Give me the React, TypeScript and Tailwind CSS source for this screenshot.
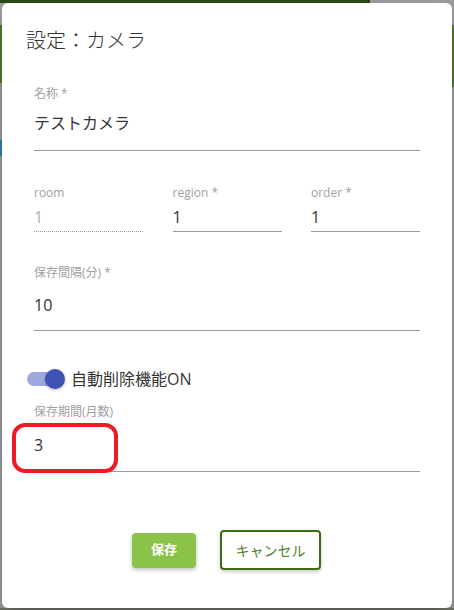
import React from "react"

const jp = { fontFamily: '"Open Sans", "Noto Sans CJK JP", sans-serif' }

function Label({ children }: { children: React.ReactNode }) {
  return <div className="text-[12px] leading-[16px] text-[#a0a0a0]">{children}</div>
}

export default function App() {
  return (
    <div className="relative w-[454px] h-[610px] overflow-hidden bg-[#9b9b9b]" style={jp}>
      {/* dimmed page behind the dialog */}
      <div className="absolute left-0 top-0 w-[370px] h-[3px] bg-[#2b4a17]" />
      <div className="absolute left-0 top-[25px] w-[3px] h-[58px] bg-[#4f7a2c]" />
      <div className="absolute left-0 top-[140px] w-[3px] h-[16px] bg-[#2b86ad]" />
      <div className="absolute right-0 top-[25px] w-[3px] h-[62px] bg-[#4f7a2c]" />
      <div className="absolute left-0 bottom-0 w-full h-[2px] bg-[#76766e]" />

      {/* dialog */}
      <div className="relative ml-[2px] mt-[3px] w-[450px] h-[605px] bg-white rounded-[6px] shadow-[0_11px_15px_-7px_rgba(0,0,0,0.2),0_24px_38px_3px_rgba(0,0,0,0.14)] flex flex-col">
        <div className="pl-[24px] mt-[24px] text-[20px] leading-[28px] font-light text-[#333]">設定：カメラ</div>

        <div className="flex flex-col pl-[32px] pr-[32px]">
          {/* 名称 */}
          <div className="mt-[31px] border-b border-[#9a9a9a] pb-[15px]">
            <Label>名称 *</Label>
            <div className="mt-[9px] text-[16px] leading-[24px] text-[#333]">テストカメラ</div>
          </div>

          {/* room / region / order */}
          <div className="mt-[34px] flex justify-between">
            <div className="w-[109px] pb-[2px] border-b border-dotted border-[#9a9a9a]">
              <Label>room</Label>
              <div className="mt-[4px] text-[16px] leading-[24px] text-[#b0b0b0]">1</div>
            </div>
            <div className="w-[109px] pb-[2px] border-b border-[#9a9a9a]">
              <Label>region *</Label>
              <div className="mt-[4px] text-[16px] leading-[24px] text-[#333]">1</div>
            </div>
            <div className="w-[109px] pb-[2px] border-b border-[#9a9a9a]">
              <Label>order *</Label>
              <div className="mt-[4px] text-[16px] leading-[24px] text-[#333]">1</div>
            </div>
          </div>

          {/* 保存間隔 */}
          <div className="mt-[33px] border-b border-[#9a9a9a] pb-[13px]">
            <Label>保存間隔(分) *</Label>
            <div className="mt-[12px] text-[16px] leading-[24px] text-[#333]">10</div>
          </div>
        </div>

        {/* switch */}
        <div className="mt-[36px] pl-[25px] flex items-center h-[24px]">
          <div className="relative w-[36px] h-[14px]">
            <div className="absolute inset-0 rounded-full bg-[#9fa8da]" />
            <div className="absolute right-[-2px] top-[-3px] w-[20px] h-[20px] rounded-full bg-[#3f51b5] shadow-[0_1px_3px_rgba(0,0,0,0.3)]" />
          </div>
          <div className="ml-[8px] text-[16px] leading-[24px] text-[#333]">自動削除機能ON</div>
        </div>

        {/* 保存期間 */}
        <div className="pl-[32px] pr-[32px]">
          <div className="relative mt-[13px] border-b border-[#9a9a9a] pb-[14px]">
            <Label>保存期間(月数)</Label>
            <div className="mt-[13px] text-[16px] leading-[24px] text-[#333]">3</div>
            <div className="absolute left-[-22px] top-[19px] w-[106px] h-[50px] rounded-[13px] border-[4px] border-[#ed1c24]" />
          </div>
        </div>

        {/* buttons */}
        <div className="mt-[58px] pl-[130px] flex items-center gap-[24px] h-[40px]">
          <button className="w-[64px] h-[35px] rounded-[4px] bg-[#8bc34a] text-white text-[13px] font-bold shadow-[0_2px_4px_rgba(0,0,0,0.25)]">
            保存
          </button>
          <button className="w-[101px] h-[40px] rounded-[4px] border-2 border-[#3c6e10] bg-white text-[#4f7f2a] text-[14px] shadow-[0_2px_4px_rgba(0,0,0,0.2)]">
            キャンセル
          </button>
        </div>
      </div>
    </div>
  )
}
